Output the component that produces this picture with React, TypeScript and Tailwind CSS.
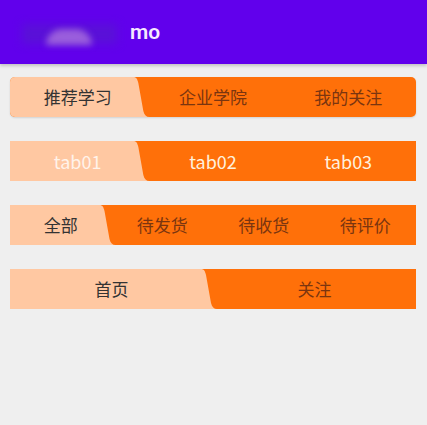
import React from "react";

type SegBarProps = {
  labels: string[];
  active: number;
  rounded?: boolean;
  activeText: string;
  idleText: string;
  textSize?: string;
};

const BAR_W = 406;
const BAR_H = 40;

// curved edge of the highlighted segment, drawn from the tab boundary
function segmentPath(boundary: number) {
  const t = boundary - 12;
  return `M0 0 H${t} C${t + 3} 0 ${t + 4} 2 ${t + 5} 6 L${t + 10} 34 C${t + 11} 38 ${t + 13} 40 ${t + 16} 40 H0 Z`;
}

function SegBar({ labels, active, rounded, activeText, idleText, textSize = "text-[17px]" }: SegBarProps) {
  const tabW = BAR_W / labels.length;
  const boundary = tabW * (active + 1);

  return (
    <div
      className={
        "relative ml-[10px] w-[406px] h-[40px] bg-[#ff7009] overflow-hidden " +
        (rounded ? "rounded-[5px] shadow-[0_1px_2px_rgba(0,0,0,0.12)]" : "")
      }
    >
      <svg
        className="absolute inset-0"
        width={BAR_W}
        height={BAR_H}
        viewBox={`0 0 ${BAR_W} ${BAR_H}`}
      >
        <path d={segmentPath(boundary)} fill="#ffc8a2" />
      </svg>
      <div className="relative flex h-full">
        {labels.map((label, i) => (
          <div
            key={label}
            className={
              "flex-1 flex items-center justify-center " +
              textSize +
              " " +
              (i === active ? activeText : idleText)
            }
          >
            {label}
          </div>
        ))}
      </div>
    </div>
  );
}

export default function App() {
  return (
    <div
      className="min-h-screen bg-[#efefef]"
      style={{ fontFamily: '"Noto Sans CJK SC", "Noto Sans", sans-serif' }}
    >
      <header className="h-[64px] bg-[#6100ec] flex items-center shadow-[0_2px_3px_rgba(0,0,0,0.18)]">
        <div className="relative w-[130px] h-[64px]">
          <div className="absolute left-[22px] top-[24px] w-[95px] h-[20px] bg-[#5a10d8] blur-[4px]" />
          <div className="absolute left-[46px] top-[29px] w-[46px] h-[16px] rounded-t-full bg-[#9a5edc] blur-[3px]" />
        </div>
        <span
          className="text-[21px] font-semibold text-[#f6e8ff] leading-none"
          style={{ fontFamily: "Roboto, sans-serif" }}
        >
          mo
        </span>
      </header>

      <div className="flex flex-col gap-[24px] pt-[13px]">
        <SegBar
          labels={["推荐学习", "企业学院", "我的关注"]}
          active={0}
          rounded
          activeText="text-[#333333]"
          idleText="text-[#7a3510]"
        />
        <SegBar
          labels={["tab01", "tab02", "tab03"]}
          active={0}
          textSize="text-[18px]"
          activeText="text-[#fff3ea]"
          idleText="text-[#fff0dc]"
        />
        <SegBar
          labels={["全部", "待发货", "待收货", "待评价"]}
          active={0}
          activeText="text-[#333333]"
          idleText="text-[#7a3510]"
        />
        <SegBar
          labels={["首页", "关注"]}
          active={0}
          activeText="text-[#333333]"
          idleText="text-[#7a3510]"
        />
      </div>
    </div>
  );
}
